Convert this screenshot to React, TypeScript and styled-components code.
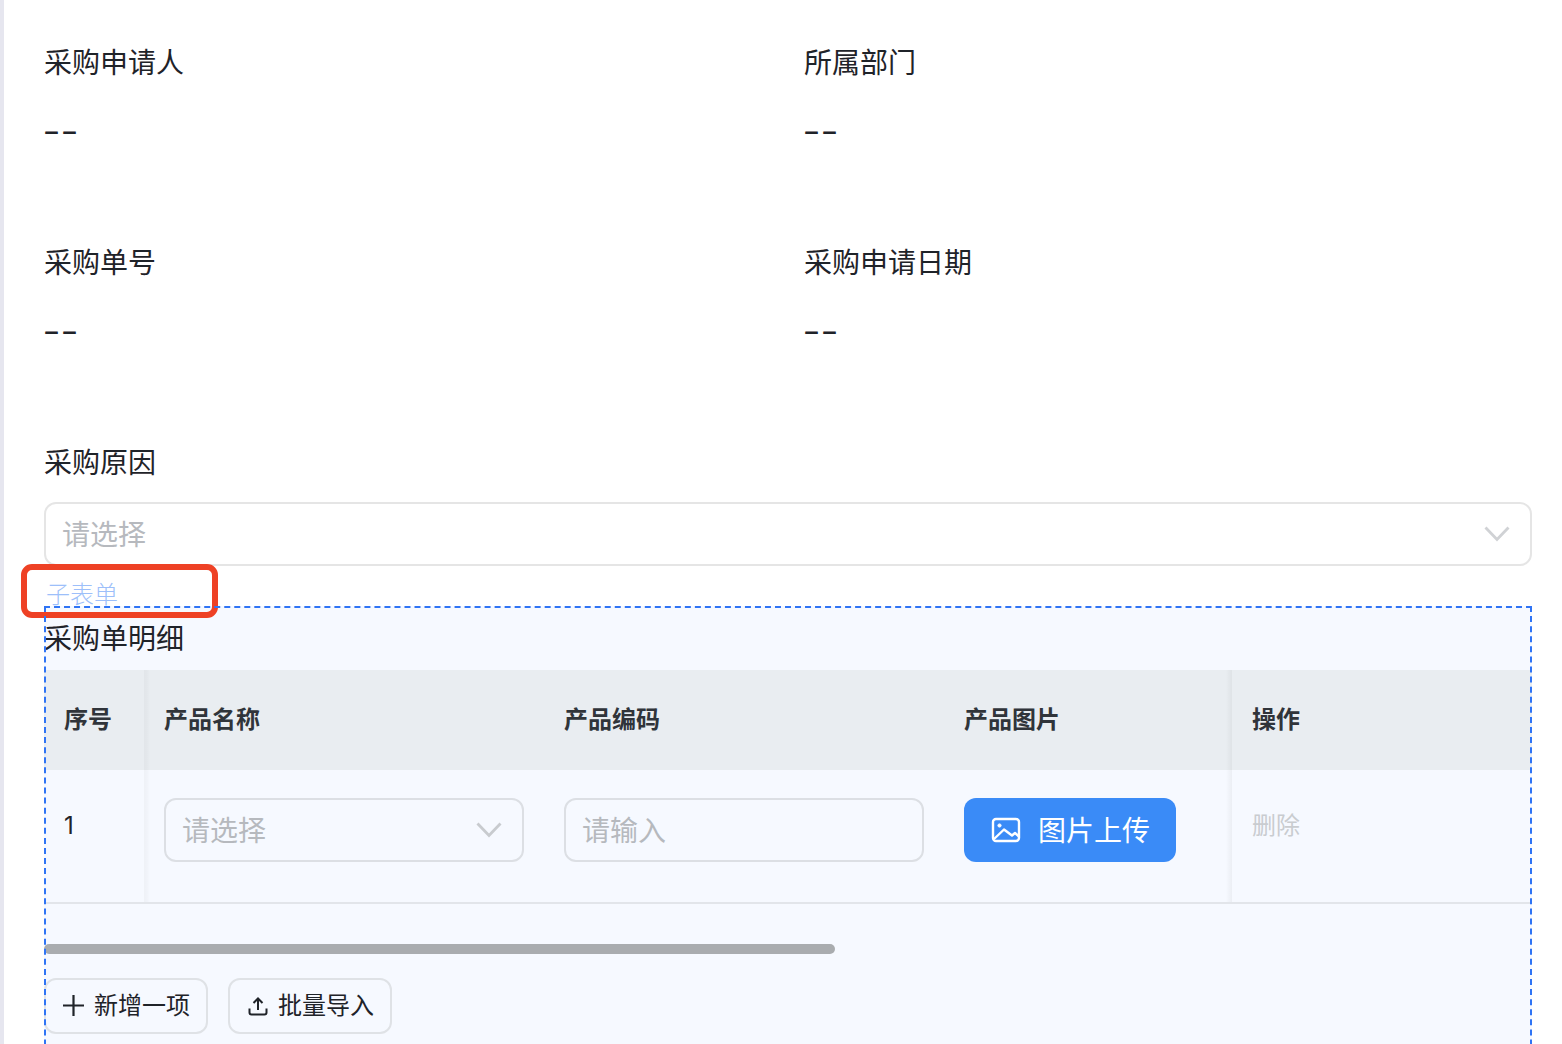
import React from "react";
import styled, { createGlobalStyle } from "styled-components";

const Global = createGlobalStyle`
  html, body { margin: 0; padding: 0; background: #fff; }
  body { font-family: Inter, "Noto Sans CJK SC", sans-serif; color: #1f2329; }
  * { box-sizing: border-box; }
`;

const Page = styled.div`
  display: flex;
  height: 1044px;
  overflow: hidden;
  background: #fff;
`;
const Strip = styled.div`
  flex: 0 0 4px;
  background: #e6e6ef;
`;
const Content = styled.main`
  position: relative;
  flex: 1;
  min-width: 0;
  padding: 43px 30px 0 40px;
`;
const FieldGrid = styled.div`
  display: grid;
  grid-template-columns: 760px 1fr;
  grid-auto-rows: 200px;
`;
const Field = styled.div`
  display: flex;
  flex-direction: column;
`;
const Label = styled.div`
  font-size: 28px;
  line-height: 40px;
  color: #1f2329;
`;
const Value = styled.div`
  margin-top: 27px;
  font-family: "Noto Sans", sans-serif;
  font-size: 30px;
  line-height: 40px;
  color: #1f2329;
  letter-spacing: 3px;
`;
const SelectBox = styled.div<{ $muted?: boolean }>`
  display: flex;
  align-items: center;
  justify-content: space-between;
  height: 64px;
  padding: 0 20px 0 16px;
  border: 2px solid ${(p) => (p.$muted ? "#dcdfe4" : "#e5e5e5")};
  border-radius: 12px;
  font-size: 28px;
  line-height: 36px;
  color: #b6b9be;
`;
const Placeholder = styled.span`
  padding-top: 2px;
`;
const ReasonField = styled.div`
  display: flex;
  flex-direction: column;
  gap: 19px;
`;
const SubLabel = styled.div`
  height: 25px;
  margin: 15px 0 0 2px;
  font-size: 24px;
  line-height: 28px;
  font-weight: 300;
  color: #9dbffa;
`;
const SubForm = styled.section`
  position: relative;
  height: 500px;
  background: #f6f9ff;
  &::after {
    content: "";
    position: absolute;
    inset: 0;
    z-index: 2;
    border: 2px dashed #2f74f5;
    pointer-events: none;
  }
`;
const SubTitle = styled.div`
  height: 64px;
  font-size: 28px;
  line-height: 66px;
  color: #1f2329;
`;
const TableGrid = styled.div`
  display: grid;
  grid-template-columns: 100px 400px 400px 288px 1fr;
  border-bottom: 2px solid #e2e5ea;
`;
function shade(side?: "left" | "right") {
  if (side === "right") {
    return `&::after { content: ""; position: absolute; z-index: 1; top: 0; bottom: 0; right: -6px; width: 6px; background: linear-gradient(to right, rgba(0,0,0,.03), rgba(0,0,0,.022) 50%, rgba(0,0,0,0)); }`;
  }
  if (side === "left") {
    return `&::before { content: ""; position: absolute; z-index: 1; top: 0; bottom: 0; left: -6px; width: 6px; background: linear-gradient(to left, rgba(0,0,0,.045), rgba(0,0,0,.025) 50%, rgba(0,0,0,0)); }`;
  }
  return "";
}
const HeadCell = styled.div<{ $shade?: "left" | "right" }>`
  position: relative;
  height: 100px;
  padding: 0 20px;
  background: #e9edf1;
  font-size: 24px;
  font-weight: 600;
  line-height: 100px;
  color: #30343a;
  ${(p) => shade(p.$shade)}
`;
const BodyCell = styled.div<{ $shade?: "left" | "right"; $text?: boolean }>`
  position: relative;
  height: 132px;
  padding: ${(p) => (p.$text ? "40px" : "28px")} 20px 0;
  font-size: 24px;
  line-height: 32px;
  ${(p) => shade(p.$shade)}
`;
const InputBox = styled.div`
  display: flex;
  align-items: center;
  height: 64px;
  padding: 0 16px;
  border: 2px solid #dcdfe4;
  border-radius: 12px;
  font-size: 28px;
  line-height: 36px;
  color: #b6b9be;
`;
const UploadButton = styled.button`
  display: inline-flex;
  align-items: center;
  gap: 17px;
  width: 212px;
  height: 64px;
  padding: 0 0 3px 27px;
  border: 0;
  border-radius: 12px;
  background: #3a8bf7;
  color: #fff;
  font-family: inherit;
  font-size: 28px;
`;
const ButtonIcon = styled.span`
  display: inline-flex;
  margin-top: 3px;
`;
const DeleteText = styled.span`
  color: #c9ccd0;
`;
const ScrollTrack = styled.div`
  margin-top: 40px;
  height: 10px;
`;
const ScrollThumb = styled.div`
  width: 791px;
  height: 10px;
  border-radius: 5px;
  background: #a9acaf;
`;
const ButtonRow = styled.div`
  display: flex;
  gap: 20px;
  margin-top: 24px;
`;
const GhostButton = styled.button<{ $gap: number }>`
  display: inline-flex;
  align-items: center;
  gap: ${(p) => p.$gap}px;
  width: 164px;
  height: 56px;
  padding: 0 0 0 18px;
  border: 2px solid #dfe2e6;
  border-radius: 12px;
  background: transparent;
  color: #1f2329;
  font-family: inherit;
  font-size: 24px;
`;
const GhostLabel = styled.span`
  margin-top: -5px;
`;
const PlusSvg = styled.svg`
  margin-left: -1px;
`;
const Callout = styled.div`
  position: absolute;
  left: 17px;
  top: 564px;
  width: 197px;
  height: 54px;
  border: 6px solid #ee4125;
  border-radius: 11px;
  pointer-events: none;
`;

const Chevron = ({ color = "#d0d2d5" }: { color?: string }) => (
  <svg width="26" height="16" viewBox="0 0 26 16" fill="none">
    <path d="M1.5 1.5 13 13.5 24.5 1.5" stroke={color} strokeWidth="2.8" />
  </svg>
);
const ImageIcon = () => (
  <svg width="30" height="26" viewBox="0 0 30 26" fill="none" stroke="#fff" strokeWidth="2.4">
    <rect x="2" y="2" width="26" height="22" rx="3" />
    <circle cx="8.5" cy="8.5" r="1.6" fill="#fff" strokeWidth="1" />
    <path d="M3 22 13 12.5 21 18.5 24 16 28 19.5" strokeLinejoin="round" />
  </svg>
);
const PlusIcon = () => (
  <PlusSvg width="22" height="22" viewBox="0 0 22 22" fill="none" stroke="#1f2329" strokeWidth="2.2">
    <path d="M10.5 0v21M0 10.5h21" />
  </PlusSvg>
);
const UploadIcon = () => (
  <svg width="20" height="20" viewBox="0 0 20 20" fill="none" stroke="#1f2329" strokeWidth="2">
    <path d="M10 14V2.5M5.5 7 10 2.5 14.5 7" />
    <path d="M1.5 12.5v4a2 2 0 0 0 2 2h13a2 2 0 0 0 2-2v-4" />
  </svg>
);

const fields = ["采购申请人", "所属部门", "采购单号", "采购申请日期"];

export default function App() {
  return (
    <Page>
      <Global />
      <Strip />
      <Content>
        <FieldGrid>
          {fields.map((label) => (
            <Field key={label}>
              <Label>{label}</Label>
              <Value>––</Value>
            </Field>
          ))}
        </FieldGrid>
        <ReasonField>
          <Label>采购原因</Label>
          <SelectBox>
            <Placeholder>请选择</Placeholder>
            <Chevron />
          </SelectBox>
        </ReasonField>
        <SubLabel>子表单</SubLabel>
        <SubForm>
          <SubTitle>采购单明细</SubTitle>
          <TableGrid>
            <HeadCell $shade="right">序号</HeadCell>
            <HeadCell>产品名称</HeadCell>
            <HeadCell>产品编码</HeadCell>
            <HeadCell>产品图片</HeadCell>
            <HeadCell $shade="left">操作</HeadCell>
            <BodyCell $text $shade="right">1</BodyCell>
            <BodyCell>
              <SelectBox $muted>
                <Placeholder>请选择</Placeholder>
                <Chevron color="#c8cbcf" />
              </SelectBox>
            </BodyCell>
            <BodyCell>
              <InputBox>
                <Placeholder>请输入</Placeholder>
              </InputBox>
            </BodyCell>
            <BodyCell>
              <UploadButton>
                <ButtonIcon>
                  <ImageIcon />
                </ButtonIcon>
                图片上传
              </UploadButton>
            </BodyCell>
            <BodyCell $text $shade="left">
              <DeleteText>删除</DeleteText>
            </BodyCell>
          </TableGrid>
          <ScrollTrack>
            <ScrollThumb />
          </ScrollTrack>
          <ButtonRow>
            <GhostButton $gap={9}>
              <PlusIcon />
              <GhostLabel>新增一项</GhostLabel>
            </GhostButton>
            <GhostButton $gap={10}>
              <UploadIcon />
              <GhostLabel>批量导入</GhostLabel>
            </GhostButton>
          </ButtonRow>
        </SubForm>
        <Callout />
      </Content>
    </Page>
  );
}
